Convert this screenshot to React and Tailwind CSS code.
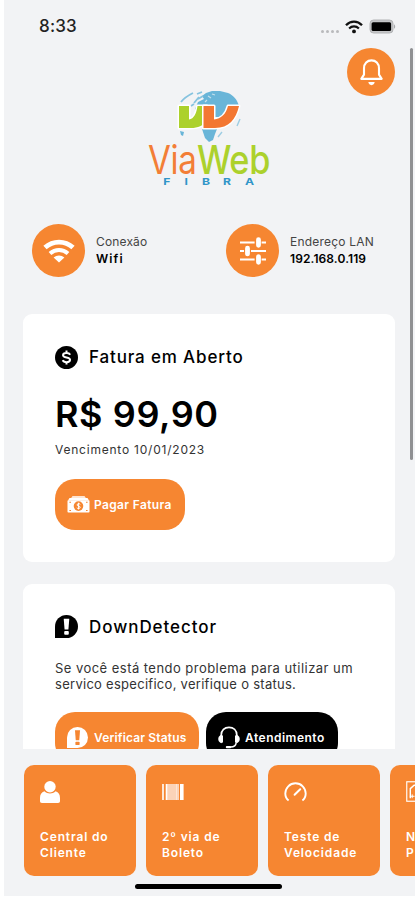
import React from "react";

const WifiIcon = ({ className = "" }) => (
  <svg viewBox="0 0 32 24" className={className} fill="none" stroke="currentColor">
    <path d="M2 8.6C10 1.2 22 1.2 30 8.6" strokeWidth="4.8" />
    <path d="M7 14.6C12.3 9.8 19.7 9.8 25 14.6" strokeWidth="4" />
    <path d="M16 23.5L10.6 18.6C13.8 15.8 18.2 15.8 21.4 18.6Z" fill="currentColor" stroke="none" />
  </svg>
);

const BellIcon = ({ className = "" }) => (
  <svg viewBox="0 0 26 30" className={className} fill="none" stroke="currentColor">
    <path
      d="M2.4 21.6H23.6L20.8 17.2V10.8C20.8 5.6 17.4 2.4 13 2.4S5.2 5.6 5.2 10.8V17.2Z"
      strokeWidth="2.2"
      strokeLinejoin="round"
    />
    <path d="M9.7 25H16.3C16 27 14.8 28.2 13 28.2S10 27 9.7 25Z" fill="currentColor" stroke="none" />
  </svg>
);

const SlidersIcon = ({ className = "" }) => (
  <svg viewBox="0 0 28 28" className={className} fill="none" stroke="currentColor">
    <path d="M1 5.5H15.6M22.6 5.5H27M1 14H5M12 14H27M1 22.5H15.6M22.6 22.5H27" strokeWidth="2.1" />
    <path d="M19.5 2.7V8.3M8.5 11.2V16.8M19.5 19.7V25.3" strokeWidth="4.8" strokeLinecap="round" />
  </svg>
);

const DollarIcon = () => (
  <svg viewBox="0 0 24 24" className="h-[23px] w-[23px] shrink-0">
    <circle cx="12" cy="12" r="12" fill="#000" />
    <path
      d="M15.8 9.1C15.2 7.8 13.8 7.2 12 7.2 9.8 7.2 8.4 8.1 8.4 9.6 8.4 13 15.7 10.9 15.7 14.4 15.7 16 14.2 16.9 12 16.9 10 16.9 8.6 16.1 8.1 14.8M12 4.6V7.3M12 16.8V19.4"
      fill="none"
      stroke="#fff"
      strokeWidth="2.1"
    />
  </svg>
);

const AlertBubble = ({ className = "", mark }) => (
  <svg viewBox="0 0 24 24" className={className}>
    <path d="M12 0A12 12 0 1 1 12 24H0V12A12 12 0 0 1 12 0Z" fill="currentColor" />
    <path d="M9.1 3.8H14.9L14 15H10Z" fill={mark} />
    <rect x="9.6" y="16.8" width="4.8" height="3.8" rx="1" fill={mark} />
  </svg>
);

const MoneyIcon = () => (
  <svg viewBox="0 0 23 17" className="h-[17px] w-[23px] shrink-0">
    <path d="M5.5 0H17.5L19 2.2H4Z" fill="#fde5d3" />
    <path d="M2.5 2H20.5L22 4.6H1Z" fill="#fff" />
    <rect x="0.5" y="4.2" width="22" height="12.3" rx="0.8" fill="#fff" />
    <circle cx="11.5" cy="10.1" r="4.8" fill="#f68631" />
    <path d="M13.3 8.4C12.2 7 9.9 7.7 10.1 9.1 10.4 10.6 13.2 9.7 13.2 11.3 13.1 12.7 10.8 13 9.8 11.8M11.6 6.7V13.5" fill="none" stroke="#fff" strokeWidth="1" />
    <path d="M2.4 6.2H4M2.4 14.5H4M19 6.2H20.6M19 14.5H20.6" stroke="#f68631" strokeWidth="1.1" />
  </svg>
);

const HeadsetIcon = () => (
  <svg viewBox="0 0 22 23" className="h-[23px] w-[22px] shrink-0" fill="none" stroke="#fff">
    <path d="M3.2 10.5V9.3C3.2 4.2 6.6 1.4 11 1.4S18.8 4.2 18.8 9.3V10.5" strokeWidth="1.7" />
    <path d="M3.7 9.3C1.7 9.3 0.7 10.8 0.7 13S1.7 16.7 3.7 16.7ZM18.3 9.3C20.3 9.3 21.3 10.8 21.3 13S20.3 16.7 18.3 16.7Z" fill="#fff" strokeWidth="0.8" />
    <path d="M4 9.5V16.6M18 9.5V16.6" strokeWidth="2" />
    <path d="M18.2 16.5C18 19.5 15.8 21 12.5 21" strokeWidth="1.5" />
    <rect x="7.8" y="20" width="5.4" height="2.3" rx="1" fill="#fff" stroke="none" />
  </svg>
);

const UserIcon = () => (
  <svg viewBox="0 0 20 22" className="h-[22px] w-[20px]" fill="#fff">
    <circle cx="10" cy="5.8" r="5.7" />
    <path d="M4.4 10.3C7.5 13.2 12.5 13.2 15.6 10.3C18.6 11.2 20 13.6 20 17V20C20 21.3 19.4 22 18 22H2C0.6 22 0 21.3 0 20V17C0 13.6 1.4 11.2 4.4 10.3Z" />
  </svg>
);

const BarcodeIcon = () => (
  <svg viewBox="0 0 22 16" className="mt-[3px] h-[16px] w-[22px]">
    <rect x="4" width="13" height="16" fill="#fbd3b8" />
    <path d="M1 0V16M4.5 0V16" stroke="#fff" strokeWidth="1.6" />
    <path d="M14.5 0V16" stroke="#fde5d6" strokeWidth="1" />
    <path d="M19.8 0V16" stroke="#fff" strokeWidth="3.6" />
  </svg>
);

const GaugeIcon = () => (
  <svg viewBox="0 0 23 20" className="mt-[1px] h-[20px] w-[23px]" fill="none" stroke="#fff">
    <path d="M4.6 18.5C2.6 17 1.3 14.5 1.3 11.6C1.3 5.9 5.8 1.3 11.5 1.3S21.7 5.9 21.7 11.6C21.7 14.5 20.4 17 18.4 18.5" strokeWidth="1.9" />
    <path d="M10.6 12.8L16.2 7.2" strokeWidth="2" strokeLinecap="round" />
  </svg>
);

const FrameIcon = () => (
  <svg viewBox="0 0 22 22" className="h-[21px] w-[21px]" fill="none" stroke="#fff">
    <rect x="0.8" y="0.8" width="20.4" height="20.4" strokeWidth="1.2" />
    <path d="M4.5 18V8L8.5 4.5H17.5V18" strokeWidth="1.5" />
    <path d="M4 16H9M6.5 14V18" strokeWidth="1" />
  </svg>
);

const Logo = () => (
  <div className="flex h-[100px] w-[126px] flex-col">
    <svg viewBox="0 0 126 55" className="h-[55px] w-[126px] shrink-0">
      {/* globe */}
      <path d="M61 4L67 2 75 2 83 4C88 6 92 10 94 17L88 28H56L50 20 53 13 59 10 57 7Z" fill="#69b5d8" />
      <path d="M36 13C39 9 44 6 48 4M49 14L54 8M46 17L49 15M52 5L57 3M53 10L58 7" fill="none" stroke="#86c3df" strokeWidth="1.8" />
      <path d="M63 7L66 9M60 13L62 11M67 5L70 6" stroke="#c5e0ec" strokeWidth="1.2" />
      <path d="M57 40H72L70 45 68 51 64 53 60 49Z" fill="#69b5d8" />
      <path d="M35 42L39 43 38 47 36 46Z" fill="#69b5d8" />
      <path d="M73 48L77 43M92 37L95 30" stroke="#9dcde3" strokeWidth="1.4" />
      {/* double V mark */}
      <g stroke="#fff" strokeWidth="3" strokeLinejoin="round" paintOrder="stroke">
        <path d="M34 17H44V30.5C49 30 51.5 24 52.5 17H62V32C58 36.5 53 39 46 39H34Z" fill="#acd12c" />
        <path d="M58.5 17H69V30.5C76 30 81 25 83 17H94C91 30 84 39 70 39H58.5Z" fill="#f37732" />
      </g>
    </svg>
    <div className="flex h-[31px] pl-[3px] text-[39px] leading-[31px]">
      <span className="block w-[49px]">
        <span className="block w-[58px] origin-left scale-x-[0.85] tracking-[-0.4px] text-[#f37e36]">Via</span>
      </span>
      <span className="block origin-left scale-x-[0.88] font-medium tracking-[-0.4px] text-[#acd12c]">Web</span>
    </div>
    <div className="mt-[2px] flex h-[9px] w-[90px] justify-between self-start pl-[1px] ml-[18px] text-[9.4px] font-bold leading-[9px] text-[#3095c8]">
      {["F", "I", "B", "R", "A"].map((letter) => (
        <span key={letter} className="scale-x-[1.3]">{letter}</span>
      ))}
    </div>
  </div>
);

const StatusBar = () => (
  <div className="flex h-[48px] items-center justify-between pl-[35px] pr-[19px] pt-[5px]">
    <span className="text-[17px] font-medium tracking-[0.2px] text-[#222]">8:33</span>
    <div className="flex items-center">
      <div className="mr-[6px] mt-[9px] flex gap-[2px]">
        {[0, 1, 2, 3].map((dot) => (
          <span key={dot} className="h-[3px] w-[3px] rounded-full bg-[#b9babc]" />
        ))}
      </div>
      <svg viewBox="0 0 18 14" className="h-[14px] w-[18px]" fill="none" stroke="#111">
        <path d="M1 5.2C5.6 0.4 12.4 0.4 17 5.2" strokeWidth="2.3" />
        <path d="M4.1 8.5C6.9 5.7 11.1 5.7 13.9 8.5" strokeWidth="2.1" />
        <circle cx="9" cy="11.4" r="1.9" fill="#111" stroke="none" />
      </svg>
      <svg viewBox="0 0 27 15" className="ml-[6px] h-[15px] w-[27px]">
        <rect x="1" y="1" width="23" height="13" rx="3.5" fill="#c4c5c7" stroke="#b2b3b5" />
        <rect x="2.6" y="3.2" width="19.5" height="8.8" rx="1.5" fill="#000" />
        <path d="M25 5.2C26.6 6 26.6 9 25 9.8Z" fill="#a9aaac" />
      </svg>
    </div>
  </div>
);

const InfoItem = ({ icon, label, value, labelClass, valueClass }) => (
  <div className="flex w-[194px] shrink-0 items-center gap-[11px]">
    <div className="flex h-[53px] w-[53px] shrink-0 items-center justify-center rounded-full bg-[#f68631] text-white">
      {icon}
    </div>
    <div className="-mt-[2px] whitespace-nowrap text-[12px] leading-[17px]">
      <p className={labelClass}>{label}</p>
      <p className={valueClass}>{value}</p>
    </div>
  </div>
);

const tiles = [
  { icon: <UserIcon />, lines: ["Central do", "Cliente"] },
  { icon: <BarcodeIcon />, lines: ["2º via de", "Boleto"] },
  { icon: <GaugeIcon />, lines: ["Teste de", "Velocidade"] },
  { icon: <FrameIcon />, lines: ["N", "P"] },
];

export default function App() {
  return (
    <div className="h-[900px] w-[417px] overflow-hidden bg-white pl-[4px] font-['Inter',sans-serif] text-black">
      <div className="relative flex h-[896px] w-[411px] flex-col overflow-hidden bg-[#f2f3f5]">
        <StatusBar />

        {/* ---------- SCROLL AREA ---------- */}
        <main className="h-[701px] shrink-0 overflow-hidden">
          <div className="flex h-[48px] justify-end pr-[20px]">
            <button className="flex h-[48px] w-[48px] items-center justify-center rounded-full bg-[#f68631] text-white">
              <BellIcon className="h-[29px] w-[25px]" />
            </button>
          </div>

          <div className="-mt-[7px] flex h-[100px] justify-start pl-[141px]">
            <Logo />
          </div>

          <div className="mt-[35px] flex pl-[28px]">
            <InfoItem
              icon={<WifiIcon className="h-[24px] w-[32px]" />}
              label="Conexão"
              value="Wifi"
              labelClass="tracking-[0.15px] text-[#444]"
              valueClass="font-semibold tracking-[1.1px]"
            />
            <InfoItem
              icon={<SlidersIcon className="h-[28px] w-[28px]" />}
              label="Endereço LAN"
              value="192.168.0.119"
              labelClass="tracking-[0.2px] text-[#444]"
              valueClass="font-semibold tracking-[0.1px]"
            />
          </div>

          <section className="ml-[19px] mt-[37px] h-[248px] w-[372px] rounded-[9px] bg-white px-[32px] pt-[32px]">
            <div className="flex h-[23px] items-center gap-[11px]">
              <DollarIcon />
              <h2 className="pt-[1px] text-[17px] font-medium tracking-[0.85px]">Fatura em Aberto</h2>
            </div>
            <p className="mt-[23px] text-[36px] font-semibold leading-[44px] tracking-[0.6px]">R$ 99,90</p>
            <p className="mt-[6px] text-[12px] leading-[16px] tracking-[0.78px] text-[#333]">Vencimento 10/01/2023</p>
            <button className="mt-[21px] flex h-[51px] w-[130px] items-center gap-[4px] rounded-[20px] bg-[#f68631] pl-[12px] text-[12px] font-semibold tracking-[0.35px] text-white">
              <MoneyIcon />
              <span className="whitespace-nowrap">Pagar Fatura</span>
            </button>
          </section>

          <section className="ml-[19px] mt-[22px] h-[248px] w-[372px] rounded-[9px] bg-white px-[32px] pt-[31px]">
            <div className="flex h-[23px] items-center gap-[11px]">
              <AlertBubble className="h-[23px] w-[23px] text-black" mark="#fff" />
              <h2 className="pt-[2px] text-[17px] font-medium tracking-[0.95px]">DownDetector</h2>
            </div>
            <p className="mt-[22px] whitespace-nowrap text-[13px] leading-[16px] tracking-[0.46px] text-[#333]">
              Se você está tendo problema para utilizar um
              <br />
              <span className="tracking-[0.28px]">servico especifico, verifique o status.</span>
            </p>
            <div className="mt-[20px] flex gap-[7px]">
              <button className="flex h-[51px] w-[144px] items-center gap-[6px] rounded-[20px] bg-[#f68631] pl-[12px] text-[12px] font-semibold tracking-[0.15px] text-white">
                <AlertBubble className="h-[21px] w-[21px] shrink-0" mark="#f68631" />
                <span className="whitespace-nowrap">Verificar Status</span>
              </button>
              <button className="flex h-[51px] w-[132px] items-center gap-[5px] rounded-[20px] bg-black pl-[12px] text-[12px] font-semibold tracking-[0.5px] text-white">
                <HeadsetIcon />
                <span className="whitespace-nowrap">Atendimento</span>
              </button>
            </div>
          </section>
        </main>

        {/* ---------- SHORTCUTS ---------- */}
        <nav className="flex gap-[10px] overflow-hidden pl-[20px] pt-[16px]">
          {tiles.map((tile, idx) => (
            <div key={idx} className="flex h-[111px] w-[112px] shrink-0 flex-col justify-between rounded-[10px] bg-[#f68631] pb-[16px] pl-[16px] pt-[16px]">
              {tile.icon}
              <p className="whitespace-nowrap text-[12px] font-semibold leading-[15.5px] tracking-[0.85px] text-white">
                {tile.lines[0]}
                <br />
                {tile.lines[1]}
              </p>
            </div>
          ))}
        </nav>

        {/* home indicator */}
        <div className="ml-[131px] mt-[8px] h-[5px] w-[147px] rounded-full bg-black" />

        {/* scrollbar thumb over the content */}
        <div className="absolute right-[2px] top-[48px] h-[412px] w-[3px] rounded-full bg-[#8f9092]" />
      </div>
    </div>
  );
}
